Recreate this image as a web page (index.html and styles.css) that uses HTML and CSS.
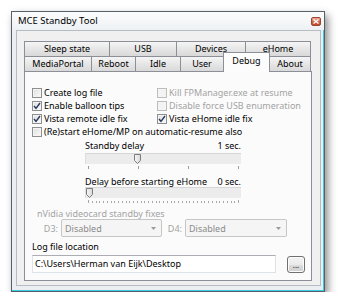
FILE: index.html
```html
<!DOCTYPE html>
<html>
<head>
<meta charset="utf-8">
<link rel="stylesheet" href="styles.css">
</head>
<body>
<div class="window">
  <div class="titlebar">
    <span class="title">MCE Standby Tool</span>
    <span class="close"><svg width="6" height="5" viewBox="0 0 6 5"><path d="M0.5 0.5 L5.5 4.5 M5.5 0.5 L0.5 4.5" stroke="#ffffff" stroke-width="1.3"/></svg></span>
  </div>
  <div class="client">
    <div class="tabs">
      <div class="tabrow">
        <div class="tab w-sleep">Sleep state</div>
        <div class="tab w-usb">USB</div>
        <div class="tab w-devices">Devices</div>
        <div class="tab w-ehome">eHome</div>
      </div>
      <div class="tabrow">
        <div class="tab w-mp">MediaPortal</div>
        <div class="tab w-reboot">Reboot</div>
        <div class="tab w-idle">Idle</div>
        <div class="tab w-user">User</div>
        <div class="tab w-debug selected">Debug</div>
        <div class="tab w-about">About</div>
      </div>
    </div>
    <div class="panel">
      <div class="checks">
        <label class="chk"><span class="box"></span><span>Create log file</span></label>
        <label class="chk disabled"><span class="box"></span><span>Kill FPManager.exe at resume</span></label>
        <label class="chk"><span class="box checked"><svg width="8" height="8" viewBox="0 0 8 8"><path d="M1 4 L3 6.3 L7 1" fill="none" stroke="#27395f" stroke-width="1.4"/></svg></span><span>Enable balloon tips</span></label>
        <label class="chk disabled"><span class="box"></span><span>Disable force USB enumeration</span></label>
        <label class="chk"><span class="box checked"><svg width="8" height="8" viewBox="0 0 8 8"><path d="M1 4 L3 6.3 L7 1" fill="none" stroke="#27395f" stroke-width="1.4"/></svg></span><span>Vista remote idle fix</span></label>
        <label class="chk"><span class="box checked"><svg width="8" height="8" viewBox="0 0 8 8"><path d="M1 4 L3 6.3 L7 1" fill="none" stroke="#27395f" stroke-width="1.4"/></svg></span><span>Vista eHome idle fix</span></label>
        <label class="chk span2"><span class="box"></span><span>(Re)start eHome/MP on automatic-resume also</span></label>
      </div>

      <div class="slider first">
        <div class="slider-head"><span>Standby delay</span><span>1 sec.</span></div>
        <div class="track">
          <svg class="thumb" style="left:48px" width="7" height="10" viewBox="0 0 7 10"><defs><linearGradient id="tg1" x1="0" y1="0" x2="1" y2="0"><stop offset="0" stop-color="#f7f7f7"/><stop offset="1" stop-color="#d8d8d8"/></linearGradient></defs><path d="M0.5 0.5 H6.5 V6.5 L3.5 9.5 L0.5 6.5 Z" fill="url(#tg1)" stroke="#7c7c7c"/></svg>
        </div>
        <svg class="ticks" width="151" height="3" viewBox="0 0 151 3" shape-rendering="crispEdges"><path d="M0.5 0v3M50.5 0v3M100.5 0v3M150.5 0v3" stroke="#9c9c9c"/></svg>
      </div>

      <div class="slider second">
        <div class="slider-head"><span>Delay before starting eHome</span><span>0 sec.</span></div>
        <div class="track">
          <svg class="thumb" style="left:0px" width="7" height="10" viewBox="0 0 7 10"><defs><linearGradient id="tg2" x1="0" y1="0" x2="1" y2="0"><stop offset="0" stop-color="#f7f7f7"/><stop offset="1" stop-color="#d8d8d8"/></linearGradient></defs><path d="M0.5 0.5 H6.5 V6.5 L3.5 9.5 L0.5 6.5 Z" fill="url(#tg2)" stroke="#7c7c7c"/></svg>
        </div>
        <svg class="ticks" width="151" height="3" viewBox="0 0 151 3" shape-rendering="crispEdges"><path d="M0.5 0v3M4.5 1v2M8.5 1v2M11.5 1v2M15.5 1v2M19.5 1v2M23.5 1v2M26.5 1v2M30.5 1v2M34.5 1v2M38.5 1v2M41.5 1v2M45.5 1v2M49.5 1v2M53.5 1v2M56.5 1v2M60.5 1v2M64.5 1v2M68.5 1v2M71.5 1v2M75.5 1v2M79.5 1v2M83.5 1v2M86.5 1v2M90.5 1v2M94.5 1v2M98.5 1v2M101.5 1v2M105.5 1v2M109.5 1v2M113.5 1v2M116.5 1v2M120.5 1v2M124.5 1v2M128.5 1v2M131.5 1v2M135.5 1v2M139.5 1v2M143.5 1v2M146.5 1v2M150.5 0v3" stroke="#a8a8a8"/></svg>
      </div>

      <div class="group-label">nVidia videocard standby fixes</div>
      <div class="combos">
        <span class="combo-label l3">D3:</span>
        <div class="combo c3"><span>Disabled</span><svg width="5" height="3" viewBox="0 0 5 3"><path d="M0 0 H5 L2.5 3 Z" fill="#9a9a9a"/></svg></div>
        <span class="combo-label l4">D4:</span>
        <div class="combo c4"><span>Disabled</span><svg width="5" height="3" viewBox="0 0 5 3"><path d="M0 0 H5 L2.5 3 Z" fill="#9a9a9a"/></svg></div>
      </div>

      <div class="log-label">Log file location</div>
      <div class="log-row">
        <div class="textbox">C:\Users\Herman van Eijk\Desktop</div>
        <div class="button">...</div>
      </div>
    </div>
  </div>
</div>
</body>
</html>
```

FILE: styles.css
```css
html, body {
  margin: 0;
  padding: 0;
  background: #ffffff;
}
body {
  font-family: "Noto Sans", "Open Sans", sans-serif;
  font-size: 9px;
  color: #000;
}
.window {
  margin: 11px 0 0 11px;
  width: 314px;
  height: 281px;
  box-sizing: border-box;
  border: 1px solid #56606b;
  background: #eceff2;
  box-shadow: inset -1px -1px 0 #3ccbe4, 3px 4px 8px rgba(0, 0, 0, 0.45);
  display: flex;
  flex-direction: column;
}
.titlebar {
  height: 18px;
  flex: none;
  display: flex;
  align-items: center;
  padding: 0 3px 0 6px;
  background: linear-gradient(#fbfcfd, #eef1f4);
}
.title {
  flex: 1;
  font-size: 9.5px;
  line-height: 12px;
}
.close {
  width: 10px;
  height: 9px;
  box-sizing: border-box;
  border-radius: 2px;
  border: 1px solid #9a4836;
  background: linear-gradient(#eeab98, #d46a50 50%, #c4452c);
  display: flex;
  align-items: center;
  justify-content: center;
}
.client {
  flex: 1;
  margin: 0 3px 5px 4px;
  border: 1px solid #b7bcc4;
  background: #f0f0f0;
  padding: 10px 8px 4px 7px;
  display: flex;
  flex-direction: column;
}
.tabs {
  flex: none;
}
.tabrow {
  display: flex;
  align-items: flex-start;
  height: 15px;
}
.tab {
  box-sizing: border-box;
  height: 15px;
  border: 1px solid #8c8f97;
  border-bottom: none;
  margin-left: -1px;
  background: linear-gradient(#f5f5f5, #e6e6e6 50%, #d9d9d9);
  display: flex;
  align-items: center;
  justify-content: center;
  line-height: 12px;
  padding-bottom: 1px;
}
.tab:first-child { margin-left: 0; }
.w-sleep { width: 86px; }
.w-usb { width: 68px; }
.w-devices { width: 70px; }
.w-ehome { width: 66px; }
.w-mp { width: 68px; }
.w-reboot { width: 45px; }
.w-idle { width: 46px; }
.w-user { width: 44px; }
.w-debug { width: 47px; }
.w-about { width: 42px; }
.tab.selected {
  position: relative;
  z-index: 1;
  height: 20px;
  margin-top: -4px;
  background: #fcfcfc;
  padding-bottom: 3px;
}
.panel {
  flex: 1;
  border: 1px solid #8c8f97;
  background: #fbfbfb;
  display: flex;
  flex-direction: column;
}
.checks {
  display: grid;
  grid-template-columns: 125px 1fr;
  grid-auto-rows: 13px;
  margin: 14px 0 0 7px;
}
.chk {
  display: flex;
  align-items: center;
  gap: 2px;
  white-space: nowrap;
}
.chk.span2 { grid-column: span 2; }
.chk.disabled { color: #a3a3a3; }
.box {
  width: 10px;
  height: 10px;
  box-sizing: border-box;
  border: 1px solid #8e8f8f;
  background: linear-gradient(135deg, #dedede, #fbfbfb);
  box-shadow: inset 0 0 0 1px #f4f4f4;
  display: flex;
  align-items: center;
  justify-content: center;
  flex: none;
}
.chk.disabled .box {
  border-color: #bdbdbd;
  background: #f3f3f3;
}
.slider {
  margin-left: 60px;
  width: 157px;
}
.slider.first { margin-top: 1px; }
.slider.second { margin-top: 6px; }
.slider-head {
  height: 12px;
  display: flex;
  justify-content: space-between;
  align-items: center;
  padding-right: 1px;
}
.slider.first .track { margin-top: 2px; }
.track {
  position: relative;
  width: 156px;
  height: 11px;
  box-sizing: border-box;
  background: #ececec;
  border-top: 1px solid #d6d6d6;
  border-left: 1px solid #dedede;
}
.thumb {
  position: absolute;
  top: 0;
}
.ticks {
  display: block;
  margin: 2px 0 0 3px;
}
.group-label {
  margin: 6px 0 0 12px;
  height: 10px;
  line-height: 10px;
  color: #a3a3a3;
}
.combos {
  display: flex;
  align-items: center;
  height: 18px;
  margin-top: 0;
}
.combo-label {
  color: #a3a3a3;
  text-align: right;
}
.l3 { width: 33px; margin-right: 3px; }
.l4 { width: 20px; margin-right: 3px; }
.combo {
  box-sizing: border-box;
  height: 18px;
  border: 1px solid #c6c6c6;
  border-radius: 2px;
  background: #f5f5f5;
  color: #8a8a8a;
  display: flex;
  align-items: center;
  justify-content: space-between;
  padding: 0 5px 0 3px;
}
.c3 { width: 101px; }
.c4 { width: 102px; }
.log-label {
  margin: 4px 0 0 7px;
  height: 12px;
  line-height: 12px;
}
.log-row {
  display: flex;
  align-items: flex-start;
  margin: 2px 0 0 7px;
}
.textbox {
  box-sizing: border-box;
  width: 244px;
  height: 18px;
  border: 1px solid #dde3e9;
  border-top-color: #abadb3;
  background: #ffffff;
  padding-left: 2px;
  line-height: 15px;
}
.button {
  box-sizing: border-box;
  margin: 1px 0 0 11px;
  width: 18px;
  height: 17px;
  border: 1px solid #707070;
  border-radius: 3px;
  background: linear-gradient(#f3f3f3, #ebebeb 50%, #dddddd 51%, #cfcfcf);
  box-shadow: inset 0 0 0 1px #fcfcfc;
  display: flex;
  align-items: flex-end;
  justify-content: center;
  font-size: 8px;
  line-height: 10px;
  padding-bottom: 2px;
}
```
